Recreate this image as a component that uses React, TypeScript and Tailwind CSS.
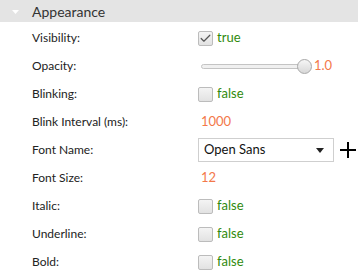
import { Check } from "lucide-react";

type Row = { label: string; kind: "bool" | "num" | "slider" | "font"; value?: string; checked?: boolean };

const rows: Row[] = [
  { label: "Visibility:", kind: "bool", checked: true },
  { label: "Opacity:", kind: "slider", value: "1.0" },
  { label: "Blinking:", kind: "bool", checked: false },
  { label: "Blink Interval (ms):", kind: "num", value: "1000" },
  { label: "Font Name:", kind: "font", value: "Open Sans" },
  { label: "Font Size:", kind: "num", value: "12" },
  { label: "Italic:", kind: "bool", checked: false },
  { label: "Underline:", kind: "bool", checked: false },
  { label: "Bold:", kind: "bool", checked: false },
];

function Box({ checked }: { checked?: boolean }) {
  return (
    <div className="w-[15px] h-[15px] rounded-[2px] border border-[#bcbcbc] bg-gradient-to-b from-[#f4f4f4] to-[#e2e2e2] flex items-center justify-center">
      {checked && <Check size={13} strokeWidth={2.2} className="text-[#555]" />}
    </div>
  );
}

function Value({ row }: { row: Row }) {
  if (row.kind === "bool")
    return (
      <div className="flex items-center gap-[4px]">
        <Box checked={row.checked} />
        <span className="text-[13px] text-[#2f8a0c]">{row.checked ? "true" : "false"}</span>
      </div>
    );
  if (row.kind === "num") return <span className="pl-[3px] text-[13px] text-[#f3784a]">{row.value}</span>;
  if (row.kind === "slider")
    return (
      <div className="flex items-center">
        <div className="ml-[3px] w-[100px] h-[5px] rounded-full border border-[#c4c4c4] bg-[#f0f0f0]" />
        <div className="-ml-[4px] w-[15px] h-[15px] rounded-full border border-[#a8a8a8] bg-gradient-to-b from-[#f6f6f6] to-[#d8d8d8]" />
        <span className="ml-[2px] text-[13px] text-[#f3784a]">{row.value}</span>
      </div>
    );
  return (
    <div className="flex items-center">
      <div className="w-[136px] h-[24px] border border-[#cfcfcf] bg-white flex items-center justify-between pl-[5px] pr-[9px] text-[13px] text-[#111]">
        <span>{row.value}</span>
        <svg width="8" height="5" viewBox="0 0 8 5">
          <path d="M0 0 L8 0 L4 5 Z" fill="#222" />
        </svg>
      </div>
      <svg width="16" height="16" viewBox="0 0 16 16" className="ml-[6px]">
        <path d="M8 0 V16 M0 8 H16" stroke="#000" strokeWidth="2" />
      </svg>
    </div>
  );
}

export default function App() {
  return (
    <div className="w-[358px] h-[272px] bg-white overflow-hidden text-[12px] font-['Lato','Open_Sans',sans-serif]">
      <div className="h-[22px] bg-[#e4e4e4] flex items-center">
        <svg width="7" height="4" viewBox="0 0 7 4" className="ml-[12px] mt-[2px]">
          <path d="M0 0 L7 0 L3.5 4 Z" fill="#fff" />
        </svg>
        <span className="ml-[13px] text-[14px] text-[#333]">Appearance</span>
      </div>
      <div className="pt-[2px]">
        {rows.map((r) => (
          <div key={r.label} className="h-[28px] flex items-center">
            <span className="w-[198px] pl-[32px] text-[#222]">{r.label}</span>
            <Value row={r} />
          </div>
        ))}
      </div>
    </div>
  );
}
